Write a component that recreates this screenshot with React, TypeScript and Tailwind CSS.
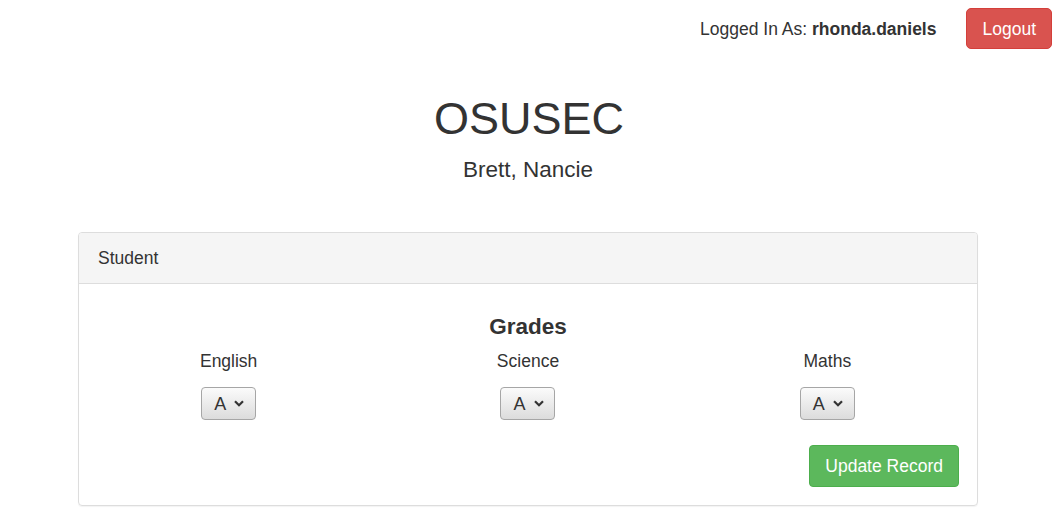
const subjects = ['English', 'Science', 'Maths']

function GradeSelect() {
  return (
    <div className="flex h-[33px] w-[55px] items-center gap-[8px] rounded-[4px] border border-[#a6a6a6] bg-gradient-to-b from-[#fbfbfb] to-[#dcdcdc] pl-[12px] text-[18px] text-[#333]">
      <span>A</span>
      <svg width="10" height="7" viewBox="0 0 10 7" aria-hidden="true">
        <path d="M1 1.2 L5 5.2 L9 1.2" fill="none" stroke="#333" strokeWidth="2.2" />
      </svg>
    </div>
  )
}

export default function App() {
  return (
    <div className="min-h-[530px] bg-white font-['Liberation_Sans',Arial,sans-serif] text-[17.5px] leading-[24px] text-[#333]">

      {/* Top bar */}
      <div className="flex items-center justify-end gap-[30px] pt-[8px] pr-[6px]">
        <span>
          Logged In As: <b className="font-bold">rhonda.daniels</b>
        </span>
        <button className="h-[41px] rounded-[5px] border border-[#d43f3a] bg-[#d9534f] px-[15px] text-[17.5px] text-white">
          Logout
        </button>
      </div>

      {/* Heading */}
      <div className="text-center">
        <h1 className="mt-[45px] text-[45px] leading-[50px] font-normal">OSUSEC</h1>
        <h4 className="mt-[13px] ml-[-2px] text-[22.5px] leading-[25px] font-normal">Brett, Nancie</h4>
      </div>

      {/* Panel */}
      <div className="mt-[50px] ml-[78px] w-[900px] rounded-[4px] border border-[#ddd] shadow-[0_1px_1px_rgba(0,0,0,0.05)]">
        <div className="rounded-t-[3px] border-b border-[#ddd] bg-[#f5f5f5] px-[19px] py-[13px]">
          Student
        </div>
        <div className="pt-[30px] pb-[18px]">
          <h4 className="text-center text-[22.5px] leading-[25px] font-bold">Grades</h4>
          <div className="mt-[10px] grid grid-cols-3">
            {subjects.map((s) => (
              <div key={s} className="flex flex-col items-center">
                <span>{s}</span>
                <div className="mt-[14px]">
                  <GradeSelect />
                </div>
              </div>
            ))}
          </div>
          <div className="mt-[25px] flex justify-end pr-[18px]">
            <button className="h-[42px] rounded-[4px] border border-[#4cae4c] bg-[#5cb85c] px-[15px] text-[17.5px] text-white">
              Update Record
            </button>
          </div>
        </div>
      </div>

    </div>
  )
}
